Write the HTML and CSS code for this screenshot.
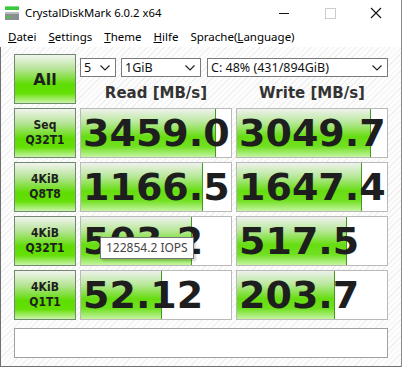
FILE: index.html
```html
<!DOCTYPE html>
<html lang="de">
<head>
    <meta charset="UTF-8">
    <title>CrystalDiskMark 6.0.2 x64</title>
    <link rel="stylesheet" href="styles.css">
</head>
<body>
    <div class="window">
        <div class="titlebar">
            <svg class="app-icon" width="16" height="16" viewBox="0 0 16 16">
                <rect x="1" y="1" width="14" height="4" fill="#3cc83c"/>
                <rect x="1" y="1" width="14" height="1" fill="#7ee07e"/>
                <rect x="1" y="7" width="14" height="8" fill="#8a9090"/>
                <rect x="1" y="7" width="14" height="2" fill="#b8bcbc"/>
                <rect x="3" y="11" width="3" height="2" fill="#36d236"/>
            </svg>
            <span class="title">CrystalDiskMark 6.0.2 x64</span>
            <div class="caption-buttons">
                <svg width="46" height="24" viewBox="0 0 46 24"><line x1="18" y1="12.5" x2="28" y2="12.5" stroke="#111" stroke-width="1"/></svg>
                <svg width="46" height="24" viewBox="0 0 46 24"><rect x="18.5" y="7.5" width="10" height="10" fill="none" stroke="#ccc" stroke-width="1"/></svg>
                <svg width="46" height="24" viewBox="0 0 46 24"><path d="M18 7 L28 17 M28 7 L18 17" stroke="#111" stroke-width="1.1"/></svg>
            </div>
        </div>
        <div class="menubar">
            <span class="menu-item"><u>D</u>atei</span>
            <span class="menu-item"><u>S</u>ettings</span>
            <span class="menu-item"><u>T</u>heme</span>
            <span class="menu-item"><u>H</u>ilfe</span>
            <span class="menu-item">Sprache(<u>L</u>anguage)</span>
        </div>

        <div class="main">
            <div class="grid">
                <div class="label-btn all">All</div>
                <div class="top-controls">
                    <div class="selects">
                        <div class="combo combo-count">5<svg class="chev" width="10" height="6" viewBox="0 0 10 6"><path d="M0.5 0.5 L5 5 L9.5 0.5" fill="none" stroke="#222" stroke-width="1.2"/></svg></div>
                        <div class="combo combo-size">1GiB<svg class="chev" width="10" height="6" viewBox="0 0 10 6"><path d="M0.5 0.5 L5 5 L9.5 0.5" fill="none" stroke="#222" stroke-width="1.2"/></svg></div>
                        <div class="combo combo-drive">C: 48% (431/894GiB)<svg class="chev" width="10" height="6" viewBox="0 0 10 6"><path d="M0.5 0.5 L5 5 L9.5 0.5" fill="none" stroke="#222" stroke-width="1.2"/></svg></div>
                    </div>
                    <div class="headings">
                        <div class="heading">Read [MB/s]</div>
                        <div class="heading">Write [MB/s]</div>
                    </div>
                </div>

                <div class="label-btn">Seq<br>Q32T1</div>
                <div class="meter"><div class="bar" style="width:135px"></div><div class="value">3459.0</div></div>
                <div class="meter"><div class="bar" style="width:134px"></div><div class="value">3049.7</div></div>

                <div class="label-btn">4KiB<br>Q8T8</div>
                <div class="meter"><div class="bar" style="width:122px"></div><div class="value">1166.5</div></div>
                <div class="meter"><div class="bar" style="width:125px"></div><div class="value">1647.4</div></div>

                <div class="label-btn">4KiB<br>Q32T1</div>
                <div class="meter has-tip"><div class="bar" style="width:111px"></div><div class="value">503.2</div>
                    <div class="tooltip">122854.2 IOPS</div>
                </div>
                <div class="meter"><div class="bar" style="width:110px"></div><div class="value">517.5</div></div>

                <div class="label-btn">4KiB<br>Q1T1</div>
                <div class="meter"><div class="bar" style="width:81px"></div><div class="value">52.12</div></div>
                <div class="meter"><div class="bar" style="width:98px"></div><div class="value">203.7</div></div>
            </div>
            <div class="comment"></div>
        </div>
    </div>
</body>
</html>
```

FILE: styles.css
```css
body {
    margin: 0;
    font-family: "Noto Sans", "Open Sans", sans-serif;
    background: #fff;
}
.window {
    width: 402px;
    height: 367px;
    box-sizing: border-box;
    display: flex;
    flex-direction: column;
    border-right: 1px solid #8a8a8a;
    background: #fff;
}
.titlebar {
    height: 25px;
    display: flex;
    align-items: center;
    padding-left: 4px;
}
.app-icon {
    margin-right: 5px;
    margin-top: 1px;
}
.title {
    font-size: 11.3px;
    color: #000;
    flex: 1;
}
.caption-buttons {
    display: flex;
    margin-right: 2px;
}
.menubar {
    height: 22px;
    display: flex;
    align-items: center;
    font-size: 11.5px;
    color: #000;
    padding-left: 2px;
}
.menu-item {
    padding: 0 6px;
}
.main {
    flex: 1;
    border-left: 1px solid #707070;
    border-bottom: 1px solid #707070;
    padding: 7px 13px 0 13px;
    background: repeating-linear-gradient(135deg, #fdfdfd 0 3px, #f0f0f0 3px 4px);
}
.grid {
    display: grid;
    grid-template-columns: 62px 152px 152px;
    grid-auto-rows: 50px;
    column-gap: 4px;
    row-gap: 4px;
}
.label-btn {
    box-sizing: border-box;
    border: 1px solid #6f8a6f;
    background: linear-gradient(to bottom, #f2f4f0 0%, #b4e494 30%, #5edc00 62%, #66e008 80%, #c8f4a8 100%);
    display: flex;
    align-items: center;
    justify-content: center;
    text-align: center;
    font-family: "DejaVu Sans Condensed", "DejaVu Sans", sans-serif;
    font-weight: bold;
    font-size: 12px;
    line-height: 15px;
    color: #1e1e1e;
}
.label-btn.all {
    font-family: "DejaVu Sans", sans-serif;
    font-size: 16px;
}
.top-controls {
    grid-column: 2 / 4;
    display: flex;
    flex-direction: column;
}
.selects {
    display: flex;
    margin-top: 4px;
    height: 19px;
}
.combo {
    box-sizing: border-box;
    height: 19px;
    border: 1px solid #7a7a7a;
    background: #fff;
    display: flex;
    align-items: center;
    justify-content: space-between;
    font-size: 12.5px;
    color: #111;
    padding: 0 5px 0 3px;
}
.combo-count {
    width: 36px;
}
.combo-size {
    width: 80px;
    margin-left: 5px;
}
.combo-drive {
    width: 181px;
    margin-left: 6px;
}
.chev {
    flex: none;
}
.headings {
    display: grid;
    grid-template-columns: 152px 152px;
    column-gap: 4px;
    margin-top: 7px;
}
.heading {
    text-align: center;
    font-family: "DejaVu Sans", sans-serif;
    font-weight: bold;
    font-size: 15px;
    color: #333;
}
.meter {
    box-sizing: border-box;
    border: 1px solid #b9b9b9;
    background: #fff;
    display: grid;
    overflow: hidden;
}
.meter.has-tip {
    position: relative;
    overflow: visible;
}
.bar {
    grid-area: 1 / 1;
    box-sizing: border-box;
    border-right: 1px solid #3f9a1e;
    background: linear-gradient(to bottom, #eef2ec 0%, #b8e89a 28%, #66dd10 58%, #70e020 78%, #c4f4a0 100%);
}
.value {
    grid-area: 1 / 1;
    align-self: center;
    padding-left: 2px;
    font-family: "DejaVu Sans", sans-serif;
    font-weight: bold;
    font-size: 38px;
    line-height: 44px;
    color: #1e1e1e;
    white-space: nowrap;
    overflow: hidden;
}
.tooltip {
    position: absolute;
    left: 19px;
    top: 20px;
    padding: 1px 5px 2px 5px;
    background: #fff;
    border: 1px solid #767676;
    box-shadow: 2px 2px 2px rgba(0, 0, 0, 0.18);
    font-size: 12px;
    color: #444;
    white-space: nowrap;
}
.comment {
    margin-top: 8px;
    width: 374px;
    height: 30px;
    box-sizing: border-box;
    border: 1px solid #a0a0a0;
    background: #fff;
}
```
